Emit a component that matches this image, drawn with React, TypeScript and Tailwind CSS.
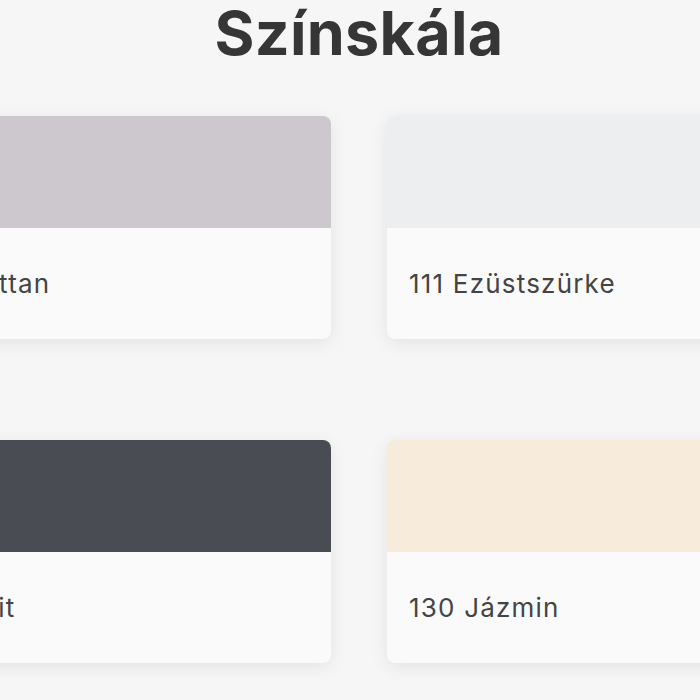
import React from "react";

const cards = [
  { name: "110 Manhattan", color: "#ccc8cd" },
  { name: "111 Ezüstszürke", color: "#eceef0" },
  { name: "114 Antracit", color: "#4a4c53" },
  { name: "130 Jázmin", color: "#f7ecdc" },
];

export default function App() {
  return (
    <div className="w-[700px] h-[700px] overflow-hidden bg-[#f6f6f6] font-['Inter',sans-serif]">
      <div className="w-[1042px] ml-[-162px]">
        <h1 className="text-center text-[61px] leading-[66px] font-bold text-[#363636] tracking-[0.3px]">
          Színskála
        </h1>
        <div className="grid grid-cols-2 gap-x-[56px] gap-y-[101px] mt-[50px]">
          {cards.map((c) => (
            <div
              key={c.name}
              className="h-[223px] rounded-[8px] overflow-hidden bg-[#fafafa] shadow-[0_4px_18px_rgba(0,0,0,0.08)] flex flex-col"
            >
              <div className="h-[112px]" style={{ backgroundColor: c.color }} />
              <div className="flex-1 flex items-center pl-[22px] text-[26px] tracking-[1.2px] text-[#444444]">
                {c.name}
              </div>
            </div>
          ))}
        </div>
      </div>
    </div>
  );
}
